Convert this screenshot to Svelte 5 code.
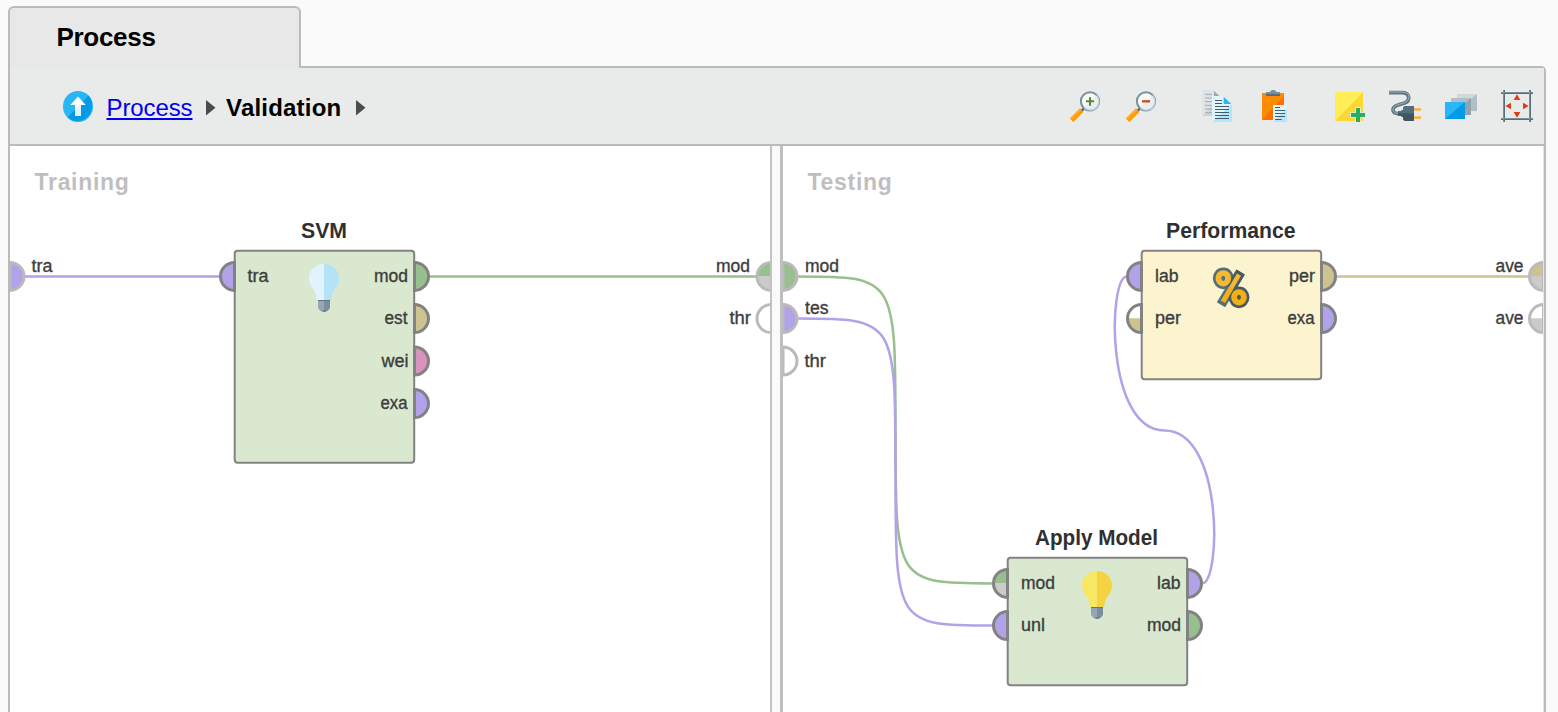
<script>
  const colors = {
    violet: '#b1a2e9',
    green: '#98bf8e',
    tan: '#ccc391',
    pink: '#d893be',
    grey: '#cbcbcb',
    white: '#ffffff',
  };

  // Ports: d = side the half circle bulges to, a/b = upper and lower fill.
  const training = {
    wires: [
      { color: colors.violet, d: 'M24 276.4H220' },
      { color: colors.green, d: 'M429 276.4H757' },
    ],
    nodes: [
      {
        title: 'SVM', tx: 301, tw: 46, x: 235, y: 251, w: 179.5, h: 212, fill: '#d9e8ce', icon: 'bulb',
        ix: 324, iy: 264, left: '#e1f3fd', right: '#b4e3f8',
      },
    ],
    ports: [
      { x: 10, y: 276.4, d: 1, a: 'violet', edge: true },
      { x: 234.5, y: 276.4, d: -1, a: 'violet' },
      { x: 414.5, y: 276.4, d: 1, a: 'green' },
      { x: 414.5, y: 318.6, d: 1, a: 'tan' },
      { x: 414.5, y: 361, d: 1, a: 'pink' },
      { x: 414.5, y: 403.6, d: 1, a: 'violet' },
      { x: 771, y: 276.4, d: -1, a: 'green', b: 'grey', edge: true },
      { x: 771, y: 318.6, d: -1, a: 'white', edge: true },
    ],
    labels: [
      ['tra', 31.5, 272, 21], ['tra', 247.5, 282, 21], ['mod', 374, 282, 34], ['est', 384.5, 324, 23],
      ['wei', 381.5, 367, 27], ['exa', 380.5, 409, 27], ['mod', 716, 272, 34], ['thr', 729.5, 324, 21.5],
    ],
  };

  const testing = {
    wires: [
      { color: colors.green, d: 'M797 276.4C895.5 276.4 895.5 276.4 895.5 430S895.5 583.4 994 583.4' },
      { color: colors.violet, d: 'M797 318.6C895.5 318.6 895.5 318.6 895.5 472S895.5 625.6 994 625.6' },
      { color: colors.violet, d: 'M1202 583.4C1221 583.4 1224 430.5 1164.5 430.5C1105 430.5 1108 276.4 1127 276.4' },
      { color: '#ccc391', d: 'M1336 276.4H1530' },
    ],
    nodes: [
      {
        title: 'Performance', tx: 1166, tw: 129.5, x: 1142, y: 251, w: 179.5, h: 128.5, fill: '#fcf4cf', icon: 'percent',
      },
      {
        title: 'Apply Model', tx: 1035, tw: 123, x: 1008, y: 558, w: 179.5, h: 127.5, fill: '#d9e8ce', icon: 'bulb',
        ix: 1097, iy: 571, left: '#f7e762', right: '#f3d440',
      },
    ],
    ports: [
      { x: 783, y: 276.4, d: 1, a: 'green', edge: true },
      { x: 783, y: 318.6, d: 1, a: 'violet', edge: true },
      { x: 783, y: 361, d: 1, a: 'white', edge: true },
      { x: 1141.5, y: 276.4, d: -1, a: 'violet' },
      { x: 1141.5, y: 318.6, d: -1, a: 'white', b: 'tan' },
      { x: 1321.5, y: 276.4, d: 1, a: 'tan' },
      { x: 1321.5, y: 318.6, d: 1, a: 'violet' },
      { x: 1007.5, y: 583.4, d: -1, a: 'green', b: 'grey' },
      { x: 1007.5, y: 625.6, d: -1, a: 'violet' },
      { x: 1187.5, y: 583.4, d: 1, a: 'violet' },
      { x: 1187.5, y: 625.6, d: 1, a: 'green' },
      { x: 1543.5, y: 276.4, d: -1, a: 'tan', b: 'grey', edge: true },
      { x: 1543.5, y: 318.6, d: -1, a: 'white', b: 'grey', edge: true },
    ],
    labels: [
      ['mod', 805, 272, 34], ['tes', 805, 314, 23.5], ['thr', 804.5, 367, 21.5],
      ['lab', 1155, 282, 23.5], ['per', 1155, 324, 26], ['per', 1289, 282, 26], ['exa', 1287.5, 324, 27],
      ['mod', 1021, 589, 34], ['unl', 1021, 631, 24], ['lab', 1157, 589, 23.5], ['mod', 1147, 631, 34],
      ['ave', 1495.5, 272, 28], ['ave', 1495.5, 324, 28],
    ],
  };
</script>

{#snippet port(p)}
  <g transform="translate({p.x} {p.y}) scale({p.d} 1)">
    <path d="M0 -13.5A13.5 13.5 0 0 1 0 13.5Z" fill={colors[p.a]} />
    {#if p.b}
      <path d="M0 -.4H13.5A13.5 13.5 0 0 1 0 13.5Z" fill={colors[p.b]} />
    {/if}
    <path
      d="M0 -14A14 14 0 0 1 0 14{p.edge && p.d < 0 ? '' : 'Z'}"
      fill="none"
      stroke={p.edge ? '#bababa' : '#828282'}
      stroke-width="3"
    />
    {#if p.edge && p.x > 1500}
      <path d="M-.5 -15.500V15.500" stroke="#bababa" stroke-width="4" />
    {/if}
  </g>
{/snippet}

{#snippet canvas(pane, viewBox, label)}
  <svg class="canvas" {viewBox} role="img" aria-label={label}>
    {#each pane.wires as w}
      <path d={w.d} fill="none" stroke={w.color} stroke-width="2.5" />
    {/each}
    {#each pane.nodes as n}
      <text class="title" x={n.tx} y={n.y - 13} textLength={n.tw} lengthAdjust="spacingAndGlyphs">{n.title}</text>
      <rect x={n.x - .3} y={n.y - .2} width={n.w} height={n.h} rx="3" fill={n.fill} stroke="#828282" stroke-width="2" />
      {#if n.icon === 'bulb'}
        <g transform="translate({n.ix} {n.iy})">
          <path d="M0 0C-9 0-15 6.500-15 14.500C-15 24-7.500 25-7.200 36H0Z" fill={n.left} />
          <path d="M0 0C9 0 15 6.500 15 14.500C15 24 7.500 25 7.200 36H0Z" fill={n.right} />
          <path d="M-6 36H0V48C-3 48-6 45-6 43Z" fill="#95a5b1" />
          <path d="M6 36H0V48C3 48 6 45 6 43Z" fill="#7a8f9b" />
          <path d="M-6 36H6V37H-6ZM-3 46.500H3L0 48Z" fill="#607684" />
        </g>
      {:else}
        <g transform="translate(1100 210) scale(.3333)" fill="none">
          <g stroke="#546e7a" stroke-width="34">
            <ellipse cx="370" cy="205" rx="14.500" ry="15.500" />
            <path d="M422 186L363 284" stroke-width="29" />
            <path d="M422 186L394 233" stroke="#455a64" stroke-width="29" />
            <ellipse cx="417" cy="262" rx="14.500" ry="15.500" stroke="#455a64" />
          </g>
          <ellipse cx="370" cy="205" rx="14.500" ry="15.500" stroke="#f5b82e" stroke-width="18" />
          <ellipse cx="417" cy="262" rx="14.500" ry="15.500" stroke="#f4ae16" stroke-width="18" />
          <path d="M417 194L369 275" stroke="#f5b82e" stroke-width="14" />
          <path d="M394 233L369 275" stroke="#f4ae16" stroke-width="14" />
          <ellipse cx="370" cy="205" rx="5" ry="7.500" fill="#546e7a" />
          <ellipse cx="417" cy="262" rx="5" ry="7.500" fill="#455a64" />
        </g>
      {/if}
    {/each}
    {#each pane.ports as p}
      {@render port(p)}
    {/each}
    {#each pane.labels as [t, x, y, w]}
      <text class="label" {x} {y} textLength={w} lengthAdjust="spacingAndGlyphs">{t}</text>
    {/each}
  </svg>
{/snippet}

<div class="window">
  <div class="tab"><span>Process</span></div>
  <section class="panel">
    <header class="toolbar">
      <svg class="up" viewBox="0 0 30 31">
        <ellipse cx="15" cy="15.500" rx="15" ry="15.500" fill="#29b6f6" />
        <path d="M25.500 4.500A15 15.500 0 0 1 4.500 26.500Z" fill="#039be5" />
        <path d="M15 5.500L22.700 14H18V25H12V14H7.300Z" fill="#fff" />
        <path d="M18 13V25H12V19.500Z" fill="#e1f3fc" />
      </svg>
      <a class="crumb" href="#process">Process</a>
      <svg class="arrow first" viewBox="0 0 10 16"><path d="M0 0L9.500 7.800L0 15.500Z" fill="#4b4b4f" /></svg>
      <b class="crumb current">Validation</b>
      <svg class="arrow" viewBox="0 0 10 16"><path d="M0 0L9.500 7.800L0 15.500Z" fill="#4b4b4f" /></svg>

      <div class="tools">
        <div class="group">
          <svg viewBox="30 30 96 96">
            <path d="M64 93L75 82" stroke="#546e7a" stroke-width="8" />
            <path d="M35 121L65 91" stroke="#ff9800" stroke-width="14" />
            <path d="M30 115L60 85L65 90L35 120Z" fill="#ffa726" />
            <circle cx="90" cy="64" r="27.500" fill="#f7f9fa" stroke="#78909c" stroke-width="6" />
            <path d="M111 45A27 27 0 0 1 71 84Z" fill="#e5e9ed" opacity=".7" />
            <path d="M78 64H102M90 52V77" stroke="#558b2f" stroke-width="6" />
          </svg>
          <svg viewBox="198 30 96 96">
            <path d="M232 93L243 82" stroke="#546e7a" stroke-width="8" />
            <path d="M203 121L233 91" stroke="#ff9800" stroke-width="14" />
            <path d="M198 115L228 85L233 90L203 120Z" fill="#ffa726" />
            <circle cx="258" cy="64" r="27.500" fill="#f7f9fa" stroke="#78909c" stroke-width="6" />
            <path d="M279 45A27 27 0 0 1 239 84Z" fill="#e5e9ed" opacity=".7" />
            <path d="M246 64H270" stroke="#d1491f" stroke-width="7" />
          </svg>
        </div>
        <div class="group">
          <svg viewBox="426 30 96 96">
            <path d="M427 30H462L480 48V108H427Z" fill="#dfe3e6" />
            <path d="M480 50V108H427Z" fill="#cfd4d9" />
            <path d="M462 33V48H478Z" fill="#9aa7ae" />
            <path d="M435 43H456M435 54H462M435 65H462M435 76H462M435 87H462M435 98H462" stroke="#a2abb1" stroke-width="3" />
            <path d="M456 48H491L516 73V126H456Z" fill="#e1f5fe" />
            <path d="M516 72V126H456Z" fill="#b3e5fc" />
            <path d="M491 50V72H514Z" fill="#29b6f6" />
            <path d="M465 61.500H486M465 70.500H486M465 79.500H507M465 88.500H507M465 97.500H507M465 106.500H507M465 115.500H507" stroke="#455a64" stroke-width="3" />
          </svg>
          <svg viewBox="594 30 96 96">
            <path d="M606 39H672V120H606Z" fill="#fb8c00" />
            <path d="M672 48V120H606Z" fill="#ff6f00" />
            <path d="M618 36H630C632 28 647 28 649 36H660V48H618Z" fill="#78909c" />
            <path d="M618 42H660V48H618Z" fill="#546e7a" />
            <path d="M639 75H681V126H639Z" fill="#e1f5fe" />
            <path d="M681 85V126H639Z" fill="#b3e5fc" />
            <path d="M645 82.500H660M645 91.500H675M645 100.500H675M645 109.500H675M645 118.500H665" stroke="#455a64" stroke-width="3" />
          </svg>
        </div>
        <div class="group">
          <svg viewBox="69 90 96 96">
            <path d="M75 96H159V183H75Z" fill="#ffee58" />
            <path d="M159 96V183H75Z" fill="#fdd835" />
            <path d="M120 165H168M144 141V189" stroke="#e8ebea" stroke-width="17" />
            <path d="M123 165H165M144 144V186" stroke="#27ae60" stroke-width="12" />
          </svg>
          <svg viewBox="237 90 96 96">
            <path d="M237 98H276C300 98 302 122 284 129L264 135C244 141 243 161 266 161H282" fill="none" stroke="#607782" stroke-width="11" />
            <path d="M237 96H276C301 95 303 121 284 128L264 134C244 140 243 160 266 160" fill="none" stroke="#a1aebf" stroke-width="3" />
            <path d="M264 153H274V150H279V142L284 138H312V183H284L279 178V170H274V167H264Z" fill="#546e7a" />
            <path d="M264 160H312V183H284L279 178V170H274V167H264Z" fill="#405760" />
            <path d="M312 148H333M312 173H333" stroke="#ffa726" stroke-width="7" />
            <path d="M312 145.500H333M312 170.500H333" stroke="#ffc46b" stroke-width="2" />
          </svg>
          <svg viewBox="405 90 96 96">
            <path d="M441 102H501V153H441Z" fill="#cfd8dc" />
            <path d="M501 102V153H441Z" fill="#b0bec5" />
            <path d="M423 114H483V165H423Z" fill="#b0bec5" />
            <path d="M483 114V165H423Z" fill="#90a4ae" />
            <path d="M405 126H465V177H405Z" fill="#29b6f6" />
            <path d="M465 126V177H405Z" fill="#039be5" />
          </svg>
          <svg viewBox="573 90 96 96">
            <path d="M573 99H669M573 177H669M582 90V186M660 90V186" stroke="#546e7a" stroke-width="6" />
            <path d="M573 97.500H669M573 175.500H669M580.500 90V186M658.500 90V186" stroke="#8197a2" stroke-width="2.500" />
            <path d="M621 103L631 120H611ZM621 173L631 156H611ZM586 138L603 128V148ZM656 138L639 128V148Z" fill="#dd3f12" />
          </svg>
        </div>
      </div>
    </header>

    <main class="panes">
      <article class="pane">
        <h2>Training</h2>
        {@render canvas(training, '10 146 760 566', 'Training process')}
      </article>
      <div class="divider"></div>
      <article class="pane testing">
        <h2>Testing</h2>
        {@render canvas(testing, '783 146 760 566', 'Testing process')}
      </article>
      <div class="edge"></div>
    </main>
  </section>
</div>

<style>
  :global(body) {
    margin: 0;
    background: #fafafa;
    overflow: hidden;
  }
  .window {
    box-sizing: border-box;
    width: 1558px;
    height: 712px;
    padding: 6px 12px 0 8px;
    display: flex;
    flex-direction: column;
    font-family: 'Liberation Sans', Arial, sans-serif;
    overflow: hidden;
  }
  .tab {
    box-sizing: border-box;
    position: relative;
    z-index: 1;
    width: 293px;
    height: 62px;
    margin-bottom: -2px;
    padding: 16px 0 0 46.500px;
    border: 2px solid #bbb;
    border-bottom: 0;
    border-radius: 6px 6px 0 0;
    background: #e8e8e8;
    font-size: 26px;
    line-height: 27px;
    letter-spacing: -.3px;
    font-weight: bold;
    color: #000;
  }
  .panel {
    flex: 1;
    min-height: 0;
    display: flex;
    flex-direction: column;
    border: 2px solid #bbb;
    border-bottom: 0;
    border-top-right-radius: 5px;
  }
  .toolbar {
    box-sizing: border-box;
    height: 78px;
    flex: none;
    display: flex;
    align-items: center;
    padding: 0 11px 0 53px;
    background: #e8ebea;
    border-bottom: 2px solid #bbb;
  }
  .up {
    width: 30px;
    height: 31px;
  }
  .crumb {
    width: 86px;
    margin: 3px 0 0 13.500px;
    font-size: 24px;
    line-height: 28px;
    letter-spacing: -.1px;
    color: #00e;
    text-decoration-thickness: 2px;
    text-underline-offset: 2px;
  }
  .crumb.current {
    width: 116px;
    margin-left: 10.500px;
    letter-spacing: .2px;
    color: #000;
  }
  .arrow {
    width: 10px;
    height: 16px;
    margin: 3px 0 0 13.500px;
  }
  .arrow.first {
    margin-left: 13px;
  }
  .tools {
    margin-left: auto;
    display: flex;
    gap: 43.500px;
  }
  .group {
    display: flex;
    gap: 24px;
  }
  .group svg {
    width: 32px;
    height: 32px;
    overflow: visible;
  }
  .panes {
    flex: 1;
    min-height: 0;
    display: flex;
    background: #fff;
  }
  .pane {
    width: 760px;
    flex: none;
    display: grid;
  }
  .pane > * {
    grid-area: 1 / 1;
  }
  h2 {
    margin: 22px 0 0 24.500px;
    font-size: 23px;
    line-height: 28px;
    letter-spacing: .7px;
    color: #bfbfbf;
  }
  .canvas {
    display: block;
    width: 760px;
    height: 566px;
    overflow: visible;
  }
  .divider {
    box-sizing: border-box;
    width: 13px;
    flex: none;
    position: relative;
    background: #fafafa;
    border-left: 2px solid #c3c3c3;
    border-right: 3px solid #bfbfbf;
  }
  .edge {
    flex: 1;
    background: #e6e6e6;
  }
  .title {
    font-size: 22px;
    font-weight: bold;
    fill: #303030;
  }
  .label {
    font-size: 17.500px;
    fill: #3d3d3d;
    stroke: #3d3d3d;
    stroke-width: .35px;
  }
</style>
